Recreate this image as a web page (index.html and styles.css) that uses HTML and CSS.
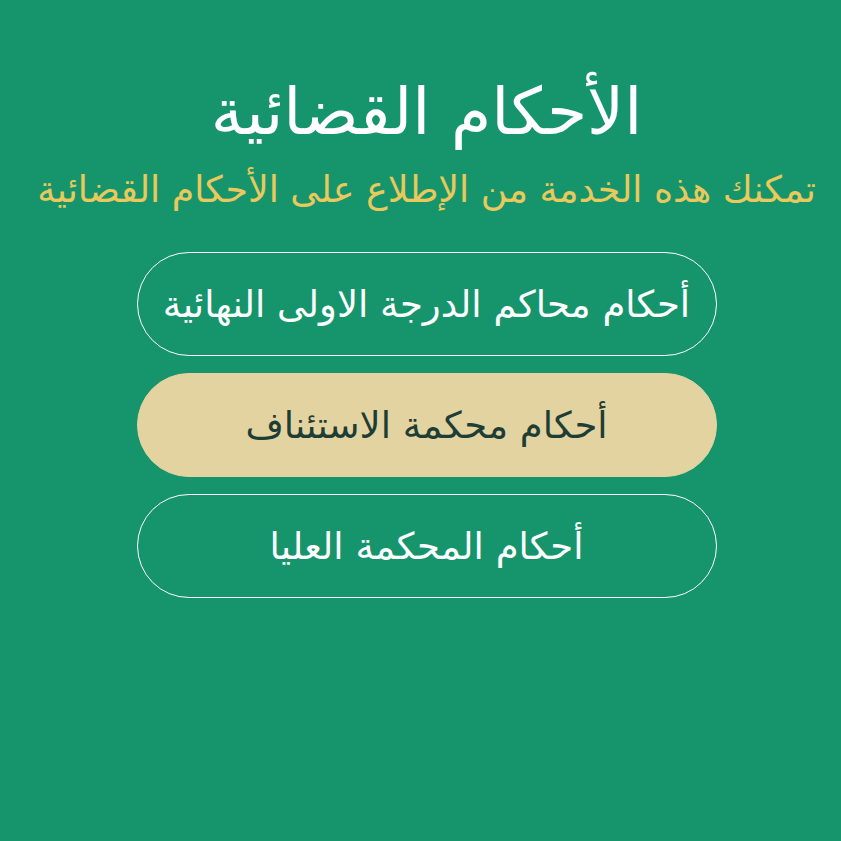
FILE: index.html
```html
<!DOCTYPE html>
<html lang="ar" dir="rtl">
<head>
<meta charset="utf-8">
<link rel="stylesheet" href="styles.css">
</head>
<body>
<main class="page">
  <h1 class="title">الأحكام القضائية</h1>
  <p class="subtitle">تمكنك هذه الخدمة من الإطلاع على الأحكام القضائية</p>
  <nav class="options">
    <a class="option">أحكام محاكم الدرجة الاولى النهائية</a>
    <a class="option option-active">أحكام محكمة الاستئناف</a>
    <a class="option">أحكام المحكمة العليا</a>
  </nav>
</main>
</body>
</html>
```
FILE: styles.css
```css
html, body {
  margin: 0;
  padding: 0;
  background: #16956c;
}
body {
  font-family: "DejaVu Sans", sans-serif;
  width: 841px;
  height: 841px;
}
.page {
  display: flex;
  flex-direction: column;
  align-items: center;
  padding-top: 72px;
  padding-left: 12px;
}
.title {
  margin: 0;
  color: #ffffff;
  font-weight: normal;
  font-size: 65px;
  line-height: 80px;
}
.subtitle {
  margin: 0;
  margin-top: 13px;
  color: #e9c95c;
  font-size: 36.4px;
  line-height: 50px;
  white-space: nowrap;
}
.options {
  margin-top: 37px;
  display: flex;
  flex-direction: column;
  gap: 17px;
}
.option {
  box-sizing: border-box;
  width: 580px;
  height: 104px;
  border: 1.6px solid #ffffff;
  border-radius: 52px;
  display: flex;
  align-items: center;
  justify-content: center;
  color: #ffffff;
  font-size: 37px;
  white-space: nowrap;
}
.option-active {
  background: #e3d3a0;
  border-color: #e3d3a0;
  color: #1d3d35;
}
```
